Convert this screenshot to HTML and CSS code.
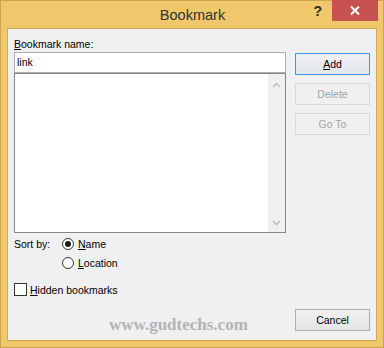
FILE: index.html
```html
<!DOCTYPE html>
<html>
  <head>
    <meta charset="utf-8" />
    <title>Bookmark</title>
    <link rel="stylesheet" href="styles.css">
  </head>
  <body>
    <div class="window">
      <div class="titlebar">
        <span></span>
        <span class="title">Bookmark</span>
        <div class="controls">
          <span class="help">?</span>
          <span class="close">
            <svg width="10" height="9" viewBox="0 0 10 9">
              <path d="M1 0.5 L9 8.5 M9 0.5 L1 8.5" stroke="#fff" stroke-width="2" fill="none" />
            </svg>
          </span>
        </div>
      </div>

      <div class="client">
        <div class="top">
          <div class="left">
            <div class="label"><u>B</u>ookmark name:</div>
            <div class="input">link</div>
            <div class="list">
              <div class="scrollbar">
                <svg width="9" height="6" viewBox="0 0 9 6">
                  <path d="M1 5 L4.5 1.5 L8 5" stroke="#c2c2c2" stroke-width="1.6" fill="none" />
                </svg>
                <svg width="9" height="6" viewBox="0 0 9 6">
                  <path d="M1 1 L4.5 4.5 L8 1" stroke="#c2c2c2" stroke-width="1.6" fill="none" />
                </svg>
              </div>
            </div>
          </div>
          <div class="right">
            <button class="btn focused"><u>A</u>dd</button>
            <button class="btn" disabled>Delete</button>
            <button class="btn" disabled>Go To</button>
          </div>
        </div>

        <div class="sort">
          <span class="sort-label">Sort by:</span>
          <div class="options">
            <div class="option"><span class="radio checked"></span><span><u>N</u>ame</span></div>
            <div class="option"><span class="radio"></span><span><u>L</u>ocation</span></div>
          </div>
        </div>

        <div class="check-row"><span class="checkbox"></span><span><u>H</u>idden bookmarks</span></div>

        <div class="bottom">
          <span class="watermark">www.gudtechs.com</span>
          <button class="btn cancel">Cancel</button>
        </div>
      </div>
    </div>
  </body>
</html>
```

FILE: styles.css
```css
html,
body {
  margin: 0;
  padding: 0;
}
body {
  font-family: "Liberation Sans", Arial, sans-serif;
  font-size: 10.5px;
  color: #000;
}
u {
  text-decoration: underline;
  text-underline-offset: 1px;
}
.window {
  width: 384px;
  height: 348px;
  box-sizing: border-box;
  background: #f0c86b;
  border: 1px solid #c9a452;
  padding: 0 6px 6px;
  display: flex;
  flex-direction: column;
}
.titlebar {
  height: 28px;
  margin: -1px -1px 0 0;
  display: grid;
  grid-template-columns: 1fr auto 1fr;
  align-items: start;
}
.title {
  font-size: 14.5px;
  color: #333;
  line-height: 30px;
}
.controls {
  display: flex;
  justify-content: flex-end;
  align-items: flex-start;
}
.help {
  font-weight: bold;
  font-size: 14px;
  color: #2a2a2a;
  line-height: 22px;
  margin-right: 10px;
}
.close {
  width: 46px;
  height: 21px;
  background: #c75050;
  display: flex;
  align-items: center;
  justify-content: center;
}
.client {
  flex: 1;
  background: #f0f0f0;
  border: 1px solid #cfa954;
  padding: 8px 6px 0;
}
.top {
  display: flex;
  gap: 9px;
}
.left {
  width: 272px;
}
.label {
  line-height: 15px;
  height: 15px;
}
.input {
  height: 21px;
  box-sizing: border-box;
  border: 1px solid #abadb3;
  background: #fff;
  padding: 0 2px;
  line-height: 19px;
}
.list {
  height: 160px;
  box-sizing: border-box;
  border: 1px solid #828790;
  background: #fff;
  display: flex;
  justify-content: flex-end;
}
.scrollbar {
  width: 17px;
  background: #f0f0f0;
  display: flex;
  flex-direction: column;
  justify-content: space-between;
  align-items: center;
  padding: 8px 0 6px;
}
.right {
  width: 75px;
  padding-top: 16px;
  display: flex;
  flex-direction: column;
  gap: 8px;
}
.btn {
  width: 75px;
  height: 22px;
  box-sizing: border-box;
  font-family: inherit;
  font-size: 10.5px;
  color: #000;
  border: 1px solid #acacac;
  background: linear-gradient(#f0f0f0, #e5e5e5);
  padding: 0;
}
.btn.focused {
  border-color: #3399ff;
  background: linear-gradient(#eef0f2, #e3e6ea);
}
.btn:disabled {
  color: #a3a3a3;
  border-color: #d9d9d9;
  background: #f0f0f0;
}
.sort {
  display: flex;
  margin-top: 5px;
}
.sort-label {
  width: 48px;
  line-height: 12px;
}
.options {
  display: flex;
  flex-direction: column;
  gap: 7px;
}
.option {
  display: flex;
  align-items: center;
  gap: 4px;
  height: 12px;
  line-height: 12px;
}
.radio {
  width: 12px;
  height: 12px;
  box-sizing: border-box;
  border: 1px solid #333;
  border-radius: 50%;
  background: #fff;
  display: flex;
  align-items: center;
  justify-content: center;
}
.radio.checked::after {
  content: "";
  width: 6px;
  height: 6px;
  border-radius: 50%;
  background: #1a1a1a;
}
.check-row {
  margin-top: 14px;
  display: flex;
  align-items: center;
  gap: 3px;
  height: 13px;
}
.checkbox {
  width: 13px;
  height: 13px;
  box-sizing: border-box;
  border: 1px solid #333;
  background: #fff;
}
.bottom {
  margin-top: 13px;
  display: flex;
  align-items: flex-start;
}
.watermark {
  font-family: "Liberation Serif", "Times New Roman", serif;
  font-weight: bold;
  font-size: 17px;
  line-height: 17px;
  color: #b4b4b4;
  margin: 7px 0 0 95px;
}
.cancel {
  margin-left: auto;
}
```
